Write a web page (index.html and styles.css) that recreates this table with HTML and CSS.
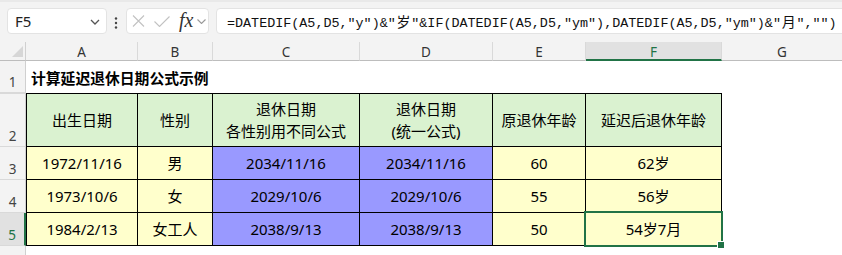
FILE: index.html
```html
<!DOCTYPE html>
<html lang="zh">
<head>
<meta charset="utf-8">
<title>延迟退休</title>
<link rel="stylesheet" href="styles.css">
</head>
<body>
<div class="toolbar">
  <div class="namebox">
    <span class="name">F5</span>
    <svg class="chev" width="10" height="6" viewBox="0 0 10 6"><path d="M1 1 L5 5 L9 1" fill="none" stroke="#555" stroke-width="1.3"/></svg>
  </div>
  <svg class="dots" width="4" height="12" viewBox="0 0 4 12"><circle cx="2" cy="1.5" r="1.2" fill="#444"/><circle cx="2" cy="6" r="1.2" fill="#444"/><circle cx="2" cy="10.5" r="1.2" fill="#444"/></svg>
  <div class="fxbox">
    <svg class="ico-x" width="13" height="12" viewBox="0 0 13 12"><path d="M1 0.5 L12 11.5 M12 0.5 L1 11.5" stroke="#c2c2c2" stroke-width="1.1" fill="none"/></svg>
    <svg class="ico-ok" width="16" height="11" viewBox="0 0 16 11"><path d="M0.5 5.5 L5.5 10.5 L15.5 0.5" stroke="#c2c2c2" stroke-width="1.1" fill="none"/></svg>
    <span class="fx">fx</span>
    <svg class="chev-s" width="9" height="5" viewBox="0 0 9 5"><path d="M0.5 0.5 L4.5 4.5 L8.5 0.5" fill="none" stroke="#999" stroke-width="1.1"/></svg>
  </div>
  <div class="formula">=DATEDIF(A5,D5,"y")&amp;"<span class="w">岁</span>"&amp;IF(DATEDIF(A5,D5,"ym"),DATEDIF(A5,D5,"ym")&amp;"<span class="w">月</span>","")</div>
</div>
<div class="sheet">
  <div class="corner"><span class="tri"></span></div>
  <div class="ch">A</div>
  <div class="ch">B</div>
  <div class="ch">C</div>
  <div class="ch">D</div>
  <div class="ch">E</div>
  <div class="ch sel">F</div>
  <div class="ch last">G</div>

  <div class="rh">1</div>
  <div class="title">计算延迟退休日期公式示例</div>
  <div class="blank"></div>

  <div class="rh top">2</div>
  <div class="c hd first top">出生日期</div>
  <div class="c hd top">性别</div>
  <div class="c hd top">退休日期<br>各性别用不同公式</div>
  <div class="c hd top">退休日期<br>(统一公式)</div>
  <div class="c hd top">原退休年龄</div>
  <div class="c hd top">延迟后退休年龄</div>
  <div class="blank"></div>

  <div class="rh">3</div>
  <div class="c y first">1972/11/16</div>
  <div class="c y">男</div>
  <div class="c p">2034/11/16</div>
  <div class="c p">2034/11/16</div>
  <div class="c y">60</div>
  <div class="c y">62岁</div>
  <div class="blank"></div>

  <div class="rh">4</div>
  <div class="c y first">1973/10/6</div>
  <div class="c y">女</div>
  <div class="c p">2029/10/6</div>
  <div class="c p">2029/10/6</div>
  <div class="c y">55</div>
  <div class="c y">56岁</div>
  <div class="blank"></div>

  <div class="rh selr">5</div>
  <div class="c y first">1984/2/13</div>
  <div class="c y">女工人</div>
  <div class="c p">2038/9/13</div>
  <div class="c p">2038/9/13</div>
  <div class="c y">50</div>
  <div class="c y active">54岁7月<span class="handle"></span></div>
  <div class="blank"></div>

  <div class="rh nob"></div>
  <div class="rest"></div>
</div>
</body>
</html>
```
FILE: styles.css
```css
html, body {
  margin: 0;
  padding: 0;
  background: #fff;
  width: 842px;
  height: 255px;
  overflow: hidden;
}

.toolbar {
  height: 42px;
  box-sizing: border-box;
  background: #f3f3f3;
  border-top: 2px solid #e9e9e9;
  padding: 6px 0 0 7px;
  display: flex;
  align-items: flex-start;
}

.namebox {
  width: 100px;
  height: 26px;
  box-sizing: border-box;
  background: #fff;
  border: 1px solid #e3e3e3;
  border-radius: 4px;
  display: flex;
  align-items: center;
  justify-content: space-between;
  padding: 0 6px 0 7px;
}

.name {
  font-family: "Noto Sans", sans-serif;
  font-size: 15px;
  color: #222;
}

.chev { margin-top: 1px; }

.dots {
  margin: 9px 0 0 7px;
}

.fxbox {
  margin-left: 8px;
  width: 83px;
  height: 26px;
  box-sizing: border-box;
  background: #fff;
  border: 1px solid #e3e3e3;
  border-radius: 4px;
  display: flex;
  align-items: center;
  padding-left: 5px;
}

.ico-ok { margin-left: 9px; }

.fx {
  margin-left: 9px;
  font-family: "Liberation Serif", serif;
  font-style: italic;
  font-size: 20px;
  color: #333;
  line-height: 18px;
  margin-top: -2px;
}

.chev-s { margin-left: 4px; }

.formula {
  margin-left: 7px;
  flex: 1;
  margin-right: -10px;
  height: 26px;
  box-sizing: border-box;
  background: #fff;
  border: 1px solid #e3e3e3;
  border-radius: 4px;
  padding-left: 10px;
  font-family: "Liberation Mono", "Noto Sans CJK SC", monospace;
  font-size: 13.4px;
  line-height: 24px;
  color: #111;
  white-space: nowrap;
  overflow: hidden;
}

.w {
  display: inline-block;
  width: 2ch;
  text-align: center;
  font-family: "Noto Sans CJK SC", sans-serif;
  font-size: 14px;
}

.sheet {
  display: grid;
  grid-template-columns: 26px 112px 75px 147px 133px 93px 136px 1fr;
  grid-template-rows: 19px 32px 54px 33px 33px 33px 1fr;
  height: 213px;
  font-family: "Noto Sans", "Noto Sans CJK SC", sans-serif;
  font-size: 15px;
  color: #000;
}

.corner {
  background: #f3f3f3;
  border-right: 1px solid #d0d0d0;
  border-bottom: 1px solid #bdbdbd;
  display: flex;
  align-items: flex-end;
  justify-content: flex-end;
  padding: 0 2px 3px 0;
}

.tri {
  width: 0;
  height: 0;
  border-left: 11px solid transparent;
  border-bottom: 11px solid #d6d6d6;
}

.ch {
  background: #f3f3f3;
  border-right: 1px solid #d9d9d9;
  border-bottom: 1px solid #bdbdbd;
  font-size: 13.5px;
  color: #333;
  display: flex;
  align-items: center;
  justify-content: center;
  padding-top: 2px;
}

.ch.last { border-right: none; }

.ch.sel {
  background: #e1e1e1;
  border-bottom: 2px solid #217346;
  color: #217346;
}

.rh {
  background: #f3f3f3;
  border-right: 1px solid #d0d0d0;
  border-bottom: 1px solid #d9d9d9;
  font-size: 13.5px;
  color: #444;
  display: flex;
  align-items: flex-end;
  justify-content: center;
  line-height: 15px;
  padding-bottom: 2px;
  box-sizing: border-box;
}

.rh.top { border-top: 1px solid #d9d9d9; }
.rh:first-of-type { border-bottom: none; }
.rh.nob { border-bottom: none; }

.rh.selr {
  background: #e1e1e1;
  border-right: 2px solid #217346;
  color: #217346;
}

.title {
  grid-column: 2 / span 6;
  font-weight: bold;
  font-size: 14.8px;
  padding-left: 5px;
  display: flex;
  align-items: center;
  white-space: nowrap;
}

.rest { grid-column: 2 / span 7; }

.c {
  border-right: 1px solid #000;
  border-bottom: 1px solid #000;
  display: flex;
  align-items: center;
  justify-content: center;
  text-align: center;
  line-height: 22px;
  white-space: nowrap;
}

.c.first { border-left: 1px solid #000; }
.c.top { border-top: 1px solid #000; }

.hd { background: #daf2d0; }
.y { background: #ffffcc; }
.p { background: #9999ff; }

.active { position: relative; }

.active::after {
  content: "";
  position: absolute;
  left: -2px;
  top: -2px;
  right: -2px;
  bottom: -2px;
  border: 2px solid #217346;
}

.handle {
  position: absolute;
  right: -4px;
  bottom: -4px;
  width: 6px;
  height: 6px;
  background: #217346;
  border: 1px solid #fff;
  z-index: 2;
}
```
